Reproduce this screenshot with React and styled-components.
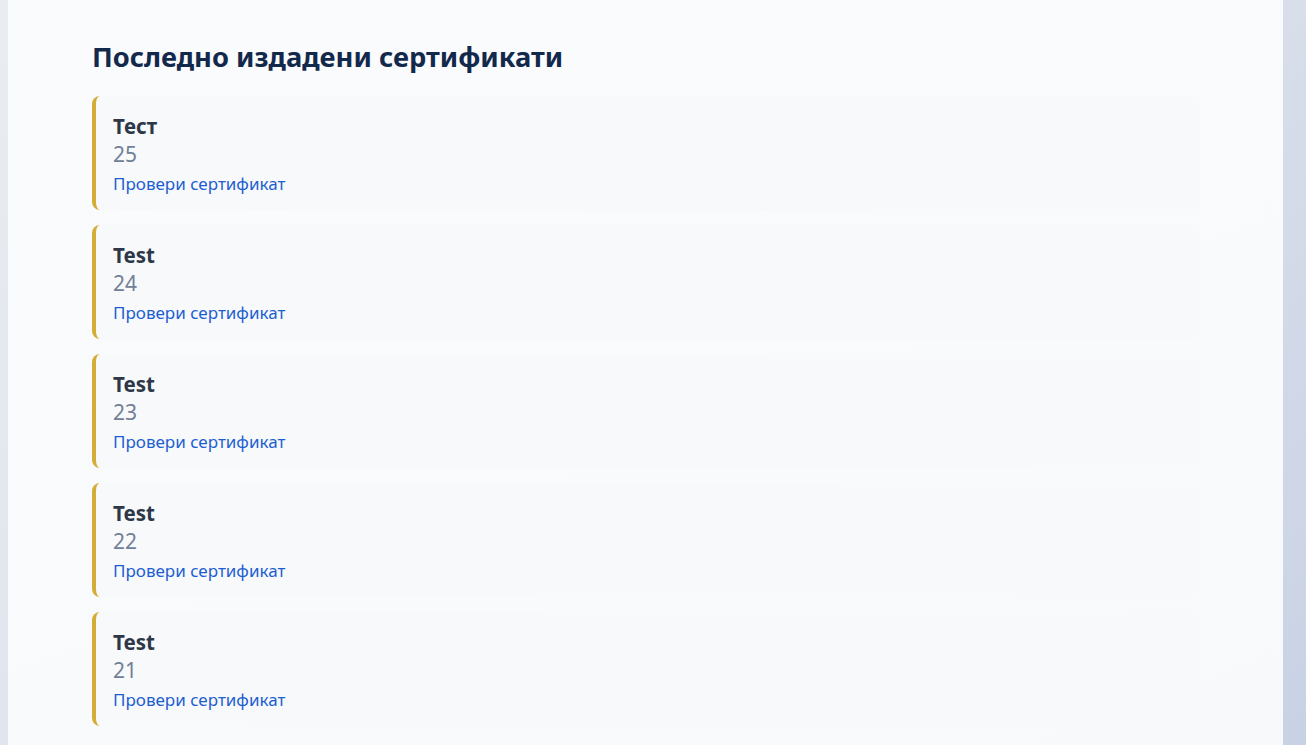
import React from 'react';
import styled, { createGlobalStyle } from 'styled-components';

const certificates = [
  { name: 'Тест', number: 25 },
  { name: 'Test', number: 24 },
  { name: 'Test', number: 23 },
  { name: 'Test', number: 22 },
  { name: 'Test', number: 21 },
];

const App = () => (
  <>
    <GlobalStyle />
    <Page>
      <Panel>
        <Heading>Последно издадени сертификати</Heading>
        <List>
          {certificates.map((cert) => (
            <Card key={cert.number}>
              <Name>{cert.name}</Name>
              <Number>{cert.number}</Number>
              <CheckLink href="#">Провери сертификат</CheckLink>
            </Card>
          ))}
        </List>
      </Panel>
    </Page>
  </>
);

const GlobalStyle = createGlobalStyle`
  html, body {
    margin: 0;
    padding: 0;
  }
  body {
    font-family: "Noto Sans", "Open Sans", sans-serif;
    background: linear-gradient(135deg, #e9ecf1 0%, #dde3ec 50%, #c9d2e5 100%);
    min-height: 100vh;
  }
`;

const Page = styled.div`
  display: flex;
  padding-left: 8px;
  min-height: 745px;
  overflow: hidden;
`;

const Panel = styled.main`
  width: 1275px;
  box-sizing: border-box;
  padding: 40px 83px 20px 84px;
  background: linear-gradient(160deg, #fafbfd 0%, #f9fafc 60%, #f7f9fb 100%);
`;

const Heading = styled.h2`
  margin: 0 0 22px;
  font-size: 27.3px;
  line-height: 34px;
  font-weight: 700;
  color: #13294b;
`;

const List = styled.div`
  display: flex;
  flex-direction: column;
  gap: 15px;
`;

const Card = styled.div`
  display: flex;
  flex-direction: column;
  align-items: flex-start;
  padding: 16px 17px 14px;
  border-left: 4px solid #d4ad37;
  border-radius: 8px;
  background-color: #f8f9fb;
`;

const Name = styled.div`
  font-size: 20.5px;
  line-height: 28px;
  font-weight: 700;
  color: #2d3748;
`;

const Number = styled.div`
  font-size: 21px;
  line-height: 28px;
  color: #718096;
`;

const CheckLink = styled.a`
  margin-top: 4px;
  font-size: 17px;
  line-height: 24px;
  color: #1d5fd1;
  text-decoration: none;
`;

export default App;
